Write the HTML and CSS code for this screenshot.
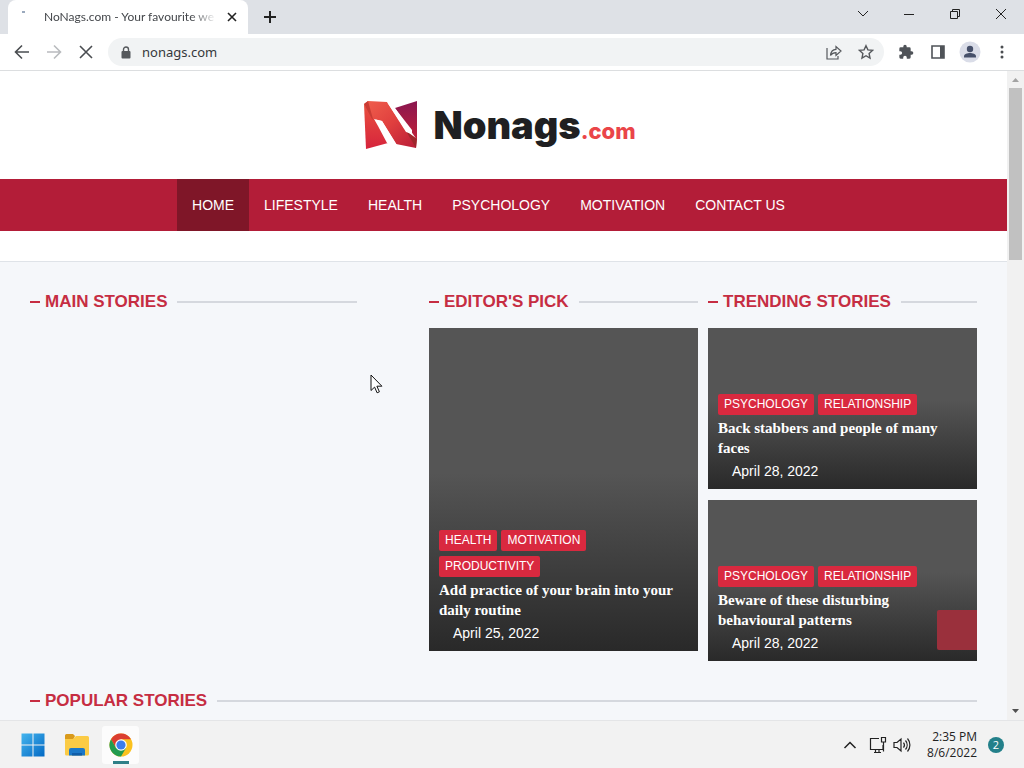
FILE: index.html
```html
<!DOCTYPE html>
<html lang="en">
<head>
  <meta charset="UTF-8" />
  <meta name="viewport" content="width=device-width, initial-scale=1.0"/>
  <title>NoNags.com - Your favourite website</title>
  <link rel="stylesheet" href="styles.css">
</head>
<body>

<!-- Browser -->
<div class="tab-strip">
  <div class="tab">
    <span class="tab-spinner"></span>
    <span class="tab-title">NoNags.com - Your favourite we</span>
    <button class="tab-close" aria-label="Close tab">
      <svg width="10" height="10" viewBox="0 0 10 10"><path d="M1 1l8 8M9 1L1 9" stroke="#222" stroke-width="1.6"/></svg>
    </button>
  </div>
  <button class="new-tab" aria-label="New tab">
    <svg width="14" height="14" viewBox="0 0 14 14"><path d="M7 1v12M1 7h12" stroke="#222" stroke-width="2"/></svg>
  </button>
  <div class="window-buttons">
    <button aria-label="Search tabs"><svg width="12" height="12" viewBox="0 0 12 12"><path d="M1 3l5 5 5-5"/></svg></button>
    <button aria-label="Minimize"><svg width="12" height="12" viewBox="0 0 12 12"><path d="M1 6.500h10"/></svg></button>
    <button aria-label="Restore"><svg width="12" height="12" viewBox="0 0 12 12"><path d="M1.500 3.500h7v7h-7zM3.500 3.500v-2h7v7h-2"/></svg></button>
    <button aria-label="Close"><svg width="12" height="12" viewBox="0 0 12 12"><path d="M1 1l10 10M11 1L1 11"/></svg></button>
  </div>
</div>

<div class="toolbar">
  <button class="tool" aria-label="Back"><svg width="16" height="16" viewBox="0 0 16 16"><path d="M15 8H2M8 1.500L1.500 8 8 14.500" stroke="#4a4d51"/></svg></button>
  <button class="tool" aria-label="Forward"><svg width="16" height="16" viewBox="0 0 16 16"><path d="M1 8h13M8 1.500L14.500 8 8 14.500" stroke="#b9bbbe"/></svg></button>
  <button class="tool" aria-label="Stop"><svg width="16" height="16" viewBox="0 0 16 16"><path d="M2 2l12 12M14 2L2 14" stroke="#4a4d51"/></svg></button>
  <div class="address-bar">
    <svg width="10" height="13" viewBox="0 0 10 13"><path d="M2.500 6V3.500a2.500 2.500 0 0 1 5 0V6" fill="none" stroke="#55585c" stroke-width="1.400"/><rect x="0.500" y="5" width="9" height="7.500" rx="1" fill="#55585c"/></svg>
    <input class="address" type="text" value="nonags.com" aria-label="Address">
    <button class="tool" aria-label="Share"><svg width="16" height="16" viewBox="0 0 16 16"><path d="M1 4v11h11v-3M4.500 11.500c.3-3.700 2.300-6 5.500-6.200V2.500l5 4.500-5 4.500V8.700c-2.300 0-4.200.8-5.500 2.800z" stroke="#55585c" stroke-width="1.200"/></svg></button>
    <button class="tool" aria-label="Bookmark"><svg width="16" height="16" viewBox="0 0 16 16"><path d="M8 1.700l1.900 4.200 4.600.5-3.400 3.100.9 4.500L8 11.700 4 14l.9-4.500L1.500 6.400l4.600-.5z" stroke="#55585c" stroke-width="1.400"/></svg></button>
  </div>
  <button class="tool" aria-label="Extensions"><svg width="16" height="16" viewBox="0 0 24 24"><path fill="#4f5358" d="M20.500 11H19V7a2 2 0 0 0-2-2h-4V3.500a2.500 2.500 0 0 0-5 0V5H4a2 2 0 0 0-2 2v3.800h1.500a2.700 2.700 0 0 1 0 5.400H2V20a2 2 0 0 0 2 2h3.800v-1.500a2.700 2.700 0 0 1 5.400 0V22H17a2 2 0 0 0 2-2v-4h1.500a2.500 2.500 0 0 0 0-5z"/></svg></button>
  <button class="tool" aria-label="Side panel"><svg width="14" height="14" viewBox="0 0 14 14"><path d="M1 1h12v12H1z" stroke="#4f5358"/><path d="M9 1h4v12H9z" fill="#4f5358"/></svg></button>
  <button class="tool" aria-label="Profile"><svg width="22" height="22" viewBox="0 0 22 22"><circle cx="11" cy="11" r="10.500" fill="#dadde8"/><circle cx="11" cy="8" r="3.200" fill="#46506a"/><path d="M5 16.500v-1.300c0-2 3.500-3.200 6-3.200s6 1.200 6 3.200v1.300z" fill="#46506a"/></svg></button>
  <button class="tool" aria-label="Menu"><svg width="16" height="16" viewBox="0 0 16 16"><g fill="#4a4d51"><circle cx="8" cy="3" r="1.500"/><circle cx="8" cy="8" r="1.500"/><circle cx="8" cy="13" r="1.500"/></g></svg></button>
</div>

<!-- Site -->
<div class="viewport">
  <div class="page">
    <header class="site-header">
      <a class="logo" href="#">
        <svg width="56" height="50" viewBox="0 0 56 50">
          <defs>
            <linearGradient id="fold" x1="0" y1="0" x2="1" y2="1">
              <stop offset="0" stop-color="#f0604d"/>
              <stop offset=".5" stop-color="#e03f3e"/>
              <stop offset="1" stop-color="#b81c38"/>
            </linearGradient>
            <linearGradient id="leg" x1="0" y1="0" x2="0" y2="1">
              <stop offset="0" stop-color="#e9503f"/>
              <stop offset="1" stop-color="#d6243c"/>
            </linearGradient>
            <linearGradient id="post" x1="0" y1="0" x2="0" y2="1">
              <stop offset="0" stop-color="#8a1650"/>
              <stop offset="1" stop-color="#c02138"/>
            </linearGradient>
          </defs>
          <path d="M1 4L14 21l11 22L3 49z" fill="url(#leg)"/>
          <path d="M32 8l22-7v39z" fill="url(#post)"/>
          <path d="M1 4l4-3 19 1 19 29 11 8-1 9-20-4-14-23-9-2z" fill="url(#fold)"/>
          <path d="M1 4l4-3 5 18 4 3-5-3z" fill="#c93c34"/>
          <path d="M43 31l11 8-1 9z" fill="#8f2a26" opacity=".7"/>
          <path d="M24 2l7 5 18 23v4l-6-2z" fill="#fff"/>
          <path d="M11 19l8 2 15 24-10-2-9-17z" fill="#fff"/>
        </svg>
        <span class="logo-text">Nonags<span class="logo-tld">.com</span></span>
      </a>
    </header>

    <nav class="site-nav">
      <ul>
        <li class="active"><a href="#">HOME</a></li>
        <li><a href="#">LIFESTYLE</a></li>
        <li><a href="#">HEALTH</a></li>
        <li><a href="#">PSYCHOLOGY</a></li>
        <li><a href="#">MOTIVATION</a></li>
        <li><a href="#">CONTACT US</a></li>
      </ul>
    </nav>

    <main class="content">
      <div class="columns">
        <section class="main-stories">
          <h2 class="section-title">MAIN STORIES</h2>
        </section>

        <section>
          <h2 class="section-title">EDITOR'S PICK</h2>
          <article class="story story-tall">
            <div class="tags">
              <a href="#">HEALTH</a>
              <a href="#">MOTIVATION</a>
              <a href="#">PRODUCTIVITY</a>
            </div>
            <h3>Add practice of your brain into your daily routine</h3>
            <time datetime="2022-04-25">April 25, 2022</time>
          </article>
        </section>

        <section>
          <h2 class="section-title">TRENDING STORIES</h2>
          <article class="story">
            <div class="tags">
              <a href="#">PSYCHOLOGY</a>
              <a href="#">RELATIONSHIP</a>
            </div>
            <h3>Back stabbers and people of many faces</h3>
            <time datetime="2022-04-28">April 28, 2022</time>
          </article>
          <article class="story">
            <div class="tags">
              <a href="#">PSYCHOLOGY</a>
              <a href="#">RELATIONSHIP</a>
            </div>
            <h3>Beware of these disturbing behavioural patterns</h3>
            <time datetime="2022-04-28">April 28, 2022</time>
          </article>
        </section>
      </div>

      <section>
        <h2 class="section-title">POPULAR STORIES</h2>
      </section>
    </main>
    <button class="back-to-top" aria-label="Back to top"></button>
  </div>

  <div class="scrollbar">
    <svg width="17" height="17" viewBox="0 0 17 17"><path d="M5 11l3.500-4 3.500 4z" fill="#a3a3a3"/></svg>
    <div class="scroll-track"><div class="scroll-thumb"></div></div>
    <svg width="17" height="17" viewBox="0 0 17 17"><path d="M5 6l3.500 4L12 6z" fill="#505050"/></svg>
  </div>
</div>

<!-- Taskbar -->
<footer class="taskbar">
  <div class="apps">
    <button aria-label="Start">
      <svg width="24" height="24" viewBox="0 0 24 24">
        <defs>
          <linearGradient id="win" x1="0" y1="0" x2="1" y2="1"><stop offset="0" stop-color="#45b5ee"/><stop offset="1" stop-color="#0369c4"/></linearGradient>
        </defs>
        <path d="M.5.500h11v11H.5zM12.500.500h11v11h-11zM.5 12.500h11v11H.5zM12.500 12.500h11v11h-11z" fill="url(#win)"/>
      </svg>
    </button>
    <button aria-label="File Explorer">
      <svg width="26" height="24" viewBox="0 0 26 24">
        <path d="M1 2.500A1.500 1.500 0 0 1 2.500 1H9l2 2-2 4H1z" fill="#d99a1c"/>
        <path d="M1 6h8l3-3h11.500A1.500 1.500 0 0 1 25 4.500V21a1.500 1.500 0 0 1-1.500 1.500h-21A1.500 1.500 0 0 1 1 21z" fill="#fbcb45"/>
        <path d="M5 22.500V17a2 2 0 0 1 2-2h12a2 2 0 0 1 2 2v5.500z" fill="#1b78c8"/>
        <path d="M8 22.500V20h10v2.500z" fill="#0f5da8"/>
      </svg>
    </button>
    <button class="running" aria-label="Google Chrome">
      <svg width="24" height="24" viewBox="0 0 24 24">
        <circle cx="12" cy="12" r="11.500" fill="#fbc21f"/>
        <path d="M2.040 6.250A11.500 11.500 0 0 1 21.960 6.250H12L7 14.900z" fill="#db3e31"/>
        <path d="M2.040 6.250A11.500 11.500 0 0 0 12 23.500L17 14.900 7 14.900z" fill="#229b50"/>
        <circle cx="12" cy="12" r="5.800" fill="#fff"/>
        <circle cx="12" cy="12" r="4.600" fill="#3b7ded"/>
      </svg>
    </button>
  </div>
  <div class="tray">
    <svg width="14" height="14" viewBox="0 0 14 14"><path d="M1.500 10L7 4.500l5.500 5.500" stroke-width="1.500"/></svg>
    <svg class="network" width="18" height="18" viewBox="0 0 18 18"><path d="M10 2.500H1.500v11H14V9M5 16.500h7M6.500 13.500v3M10 13.500v3M12.500 1.500h4v4.500h-4zM14.500 6v9.500"/></svg>
    <svg width="18" height="16" viewBox="0 0 18 16"><path d="M1 5.500v5h3l4 3.500V2L4 5.500zM10.500 5.500a4 4 0 0 1 0 5M12.500 3.500a7 7 0 0 1 0 9M14.500 1.500a10 10 0 0 1 0 13"/></svg>
    <div class="clock">2:35 PM<br>8/6/2022</div>
    <span class="badge">2</span>
  </div>
</footer>

<svg class="cursor" width="13" height="20" viewBox="0 0 13 20"><path d="M1 1v15.500l3.600-3.400 2.500 5.700 2.300-1-2.500-5.600h5z" fill="#fff" stroke="#111"/></svg>

</body>
</html>
```
FILE: styles.css
```css
* {
  box-sizing: border-box;
}

body {
  margin: 0;
  height: 100vh;
  display: flex;
  flex-direction: column;
  overflow: hidden;
  font-family: "Liberation Sans", Arial, sans-serif;
}

button {
  display: flex;
  align-items: center;
  justify-content: center;
  padding: 0;
  border: none;
  background: none;
}

svg {
  display: block;
  flex: none;
}

/* Tabs */
.tab-strip {
  display: flex;
  align-items: stretch;
  height: 34px;
  flex: none;
  padding-left: 8px;
  background: #dee1e6;
}

.tab {
  display: flex;
  align-items: center;
  width: 240px;
  padding: 0 8px 0 12px;
  background: #fff;
  border-radius: 8px 8px 0 0;
}

.tab-spinner {
  align-self: flex-start;
  width: 3px;
  height: 2px;
  margin: 11px 19px 0 2px;
  background: #9aa9bd;
}

.tab-title {
  flex: 1;
  overflow: hidden;
  white-space: nowrap;
  font: 12px/16px Lato, sans-serif;
  color: #44474b;
  mask-image: linear-gradient(to right, #000 85%, transparent);
}

.tab-close {
  width: 16px;
  height: 16px;
  margin-left: 7px;
}

.new-tab {
  width: 28px;
  margin-left: 8px;
}

.window-buttons {
  display: flex;
  margin-left: auto;
  padding-bottom: 6px;
}

.window-buttons button {
  width: 46px;
}

.window-buttons svg {
  fill: none;
  stroke: #222;
  stroke-width: 1;
}

/* Toolbar */
.toolbar {
  display: flex;
  align-items: center;
  height: 37px;
  flex: none;
  padding: 0 6px;
  background: #fff;
  border-bottom: 1px solid #dcdee0;
}

.tool {
  width: 32px;
  height: 28px;
}

.tool svg {
  fill: none;
  stroke-width: 1.6;
}

.address-bar {
  flex: 1;
  display: flex;
  align-items: center;
  height: 28px;
  margin: 0 6px;
  padding: 0 2px 0 13px;
  background: #f1f3f4;
  border-radius: 14px;
}

.address {
  flex: 1;
  min-width: 0;
  padding: 0;
  margin-left: 11px;
  border: none;
  background: none;
  font: 13px/20px "Noto Sans", sans-serif;
  color: #35383b;
}

/* Page */
.viewport {
  flex: 1;
  min-height: 0;
  display: flex;
}

.page {
  position: relative;
  flex: 1;
  overflow: hidden;
  background: #f5f7fa;
}

.site-header {
  display: flex;
  justify-content: center;
  padding: 29px 0;
  background: #fff;
}

.logo {
  display: flex;
  align-items: center;
  gap: 14px;
  padding-right: 8px;
  text-decoration: none;
}

.logo-text {
  font: 900 38px/50px Inter, sans-serif;
  color: #1f1f21;
}

.logo-tld {
  font-size: 22px;
  font-weight: 800;
  line-height: 22px;
  color: #ea4549;
}

.site-nav {
  padding-right: 30px;
  background: #b31d38;
}

.site-nav ul {
  display: flex;
  justify-content: center;
  margin: 0;
  padding: 0;
  list-style: none;
}

.site-nav a {
  display: block;
  padding: 0 15px;
  font-size: 14px;
  line-height: 52px;
  color: #fff;
  text-decoration: none;
}

.site-nav .active {
  background: #7f1628;
}

.content {
  border-top: 1px solid #dfe3e8;
  padding: 30px 30px 0;
  box-shadow: 0 -30px 0 #fff;
  margin-top: 30px;
}

.columns {
  display: grid;
  grid-template-columns: 389fr 269fr 269fr;
  gap: 10px;
  margin-bottom: 30px;
}

.main-stories {
  padding-right: 62px;
}

.section-title {
  display: flex;
  align-items: center;
  margin: 0 0 16px;
  font-size: 17px;
  line-height: 20px;
  color: #c62d42;
  white-space: nowrap;
}

.section-title::before {
  content: "";
  width: 10px;
  height: 2px;
  margin-right: 5px;
  background: #c62d42;
}

.section-title::after {
  content: "";
  flex: 1;
  height: 2px;
  margin-left: 10px;
  background: #d5d8de;
}

.story {
  display: flex;
  flex-direction: column;
  justify-content: flex-end;
  min-height: 161px;
  padding: 10px;
  background: linear-gradient(#555 45%, #292929);
  color: #fff;
}

.story + .story {
  margin-top: 11px;
}

.story-tall {
  min-height: 323px;
}

.tags {
  display: flex;
  flex-wrap: wrap;
  gap: 5px 4px;
  margin-bottom: 3px;
}

.tags a {
  padding: 0 6px;
  font-size: 12px;
  line-height: 21px;
  color: #fff;
  background: #d9293f;
  border-radius: 2px;
  text-decoration: none;
}

.story h3 {
  margin: 0 0 5px;
  font: bold 15px/20px "Liberation Serif", "Times New Roman", serif;
}

.story time {
  padding-left: 14px;
  font-size: 14px;
  line-height: 16px;
}

.back-to-top {
  position: absolute;
  right: 30px;
  bottom: 70px;
  width: 40px;
  height: 40px;
  background: #9a303c;
  border-radius: 2px 0 0 2px;
}

.scrollbar {
  display: flex;
  flex-direction: column;
  width: 17px;
  background: #f1f1f1;
}

.scroll-track {
  flex: 1;
  padding: 0 2px;
}

.scroll-thumb {
  height: 28%;
  background: #c1c1c1;
}

/* Taskbar */
.taskbar {
  display: flex;
  align-items: center;
  justify-content: space-between;
  height: 48px;
  flex: none;
  padding: 0 20px 0 14px;
  background: #f2f2f2;
  border-top: 1px solid #e4e5e7;
}

.apps {
  display: flex;
  gap: 7px;
}

.apps button {
  width: 37px;
  height: 38px;
}

.apps .running {
  background: linear-gradient(#2f7f87, #2f7f87) center bottom / 16px 3px no-repeat #fcfcfc;
  border-radius: 3px;
}

.tray {
  display: flex;
  align-items: center;
}

.tray svg {
  fill: none;
  stroke: #222;
  stroke-width: 1.2;
}

.network {
  margin: 0 6px 0 12px;
}

.clock {
  margin: 0 11px 0 16px;
  font: 12px/16px "Open Sans", sans-serif;
  text-align: right;
  color: #222;
}

.badge {
  width: 16px;
  height: 16px;
  border-radius: 50%;
  background: #23808a;
  color: #fff;
  font: 11px/16px "Open Sans", sans-serif;
  text-align: center;
}

/* Mouse pointer */
.cursor {
  position: absolute;
  left: 370px;
  top: 374px;
}
```
